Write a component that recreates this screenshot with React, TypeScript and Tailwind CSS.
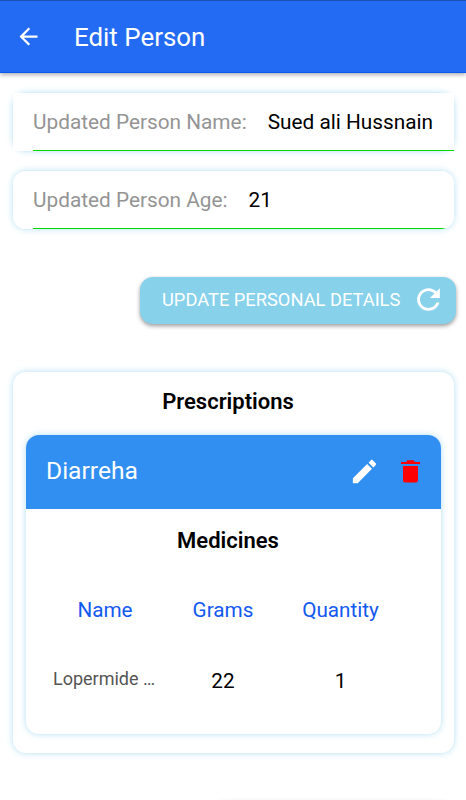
import { IoMdCreate, IoMdRefresh } from "react-icons/io";

const medicines = [{ name: "Lopermide …", grams: 22, quantity: 1 }];

function Field({ label, value, clipped }: { label: string; value: string; clipped?: boolean }) {
  return (
    <div className="h-[58px] rounded-[13px] shadow-[0_0_6px_rgba(135,206,235,0.65)]">
      <div className={`h-full bg-white pl-5 ${clipped ? "overflow-hidden rounded-[13px]" : ""}`}>
        <label className="flex h-full items-center border-b border-[#00d900] pt-[2px] text-[20.8px]">
          <span className="whitespace-nowrap text-[#949494]">{label}</span>
          <span className="ml-[21px] whitespace-nowrap text-black">{value}</span>
        </label>
      </div>
    </div>
  );
}

export default function App() {
  return (
    <main className="flex h-[800px] w-[466px] flex-col overflow-hidden bg-white font-[Roboto,sans-serif]">
      <header className="flex h-[73px] shrink-0 items-center border-y border-t-[#1c50b0] border-b-[#0a58f2] bg-[#246bf4] pl-[15px] text-white shadow-[0_2px_4px_rgba(0,0,0,0.3)]">
        <button type="button" aria-label="Back">
          <svg viewBox="0 0 24 24" className="h-[27px] w-[27px]" fill="currentColor">
            <path d="M20 11H7.83l5.59-5.59L12 4l-8 8 8 8 1.41-1.41L7.83 13H20v-2z" />
          </svg>
        </button>
        <h1 className="ml-8 pt-px text-[25.9px]">Edit Person</h1>
      </header>

      <div className="flex flex-col px-3 pt-5">
        <div className="flex flex-col gap-5 pl-px">
          <Field label="Updated Person Name:" value="Sued ali Hussnain" />
          <Field label="Updated Person Age:" value="21" clipped />
        </div>

        <button
          type="button"
          className="mt-[48px] -mr-[2px] flex h-[47px] w-[316px] items-center self-end rounded-[13px] bg-[#87d1eb] pb-[2px] pl-[22px] text-[18.3px] text-white shadow-[0_2px_4px_rgba(0,0,0,0.4)]"
        >
          <span className="whitespace-nowrap">UPDATE PERSONAL DETAILS</span>
          <IoMdRefresh className="mb-px ml-3 h-[33px] w-[33px] shrink-0" />
        </button>

        <section className="mt-[48px] ml-px h-[381px] rounded-[13px] bg-white px-[13px] shadow-[0_0_6px_rgba(135,206,235,0.65)]">
          <h2 className="flex h-[63px] items-center justify-center pr-[11px] pb-[4px] text-[22px] font-semibold text-black">Prescriptions</h2>
          <article className="h-[299px] overflow-hidden rounded-[13px] bg-white shadow-[0_0_6px_rgba(135,206,235,0.65)]">
            <div className="flex h-[74px] items-center bg-[#318ff2] pr-[15px] pb-[2px] pl-5 text-white">
              <h3 className="flex-1 text-[24.6px]">Diarreha</h3>
              <IoMdCreate className="h-[31px] w-[31px]" />
              <svg viewBox="0 0 31 31" className="ml-[15px] h-[31px] w-[31px]" fill="#ff0000">
                <path d="M6 6h5l1.5-1.7h6L20 6h5v2H6zM8 10h15v14.5q0 2-2 2H10q-2 0-2-2z" />
              </svg>
            </div>
            <h3 className="flex h-[62px] items-center justify-center pr-[11px] text-[22px] font-semibold text-black">Medicines</h3>
            <div className="grid grid-cols-[118px_118px_117px] pt-[24px] pl-5 text-center text-[20.7px] text-[#1259f0]">
              <span>Name</span>
              <span>Grams</span>
              <span>Quantity</span>
            </div>
            {medicines.map((medicine) => (
              <div key={medicine.name} className="grid grid-cols-[118px_118px_117px] items-center pt-[39px] pl-5 text-center text-[20.7px] text-black">
                <span className="ml-[7px] pb-[6px] text-left text-[18px] whitespace-nowrap text-[#555]">{medicine.name}</span>
                <span>{medicine.grams}</span>
                <span>{medicine.quantity}</span>
              </div>
            ))}
          </article>
        </section>

        {/* top shade of the next button below the fold */}
        <div className="mt-[49px] ml-[200px] h-12 rounded-[13px] shadow-[0_0_5px_rgba(0,0,0,0.12)]" />
      </div>
    </main>
  );
}
